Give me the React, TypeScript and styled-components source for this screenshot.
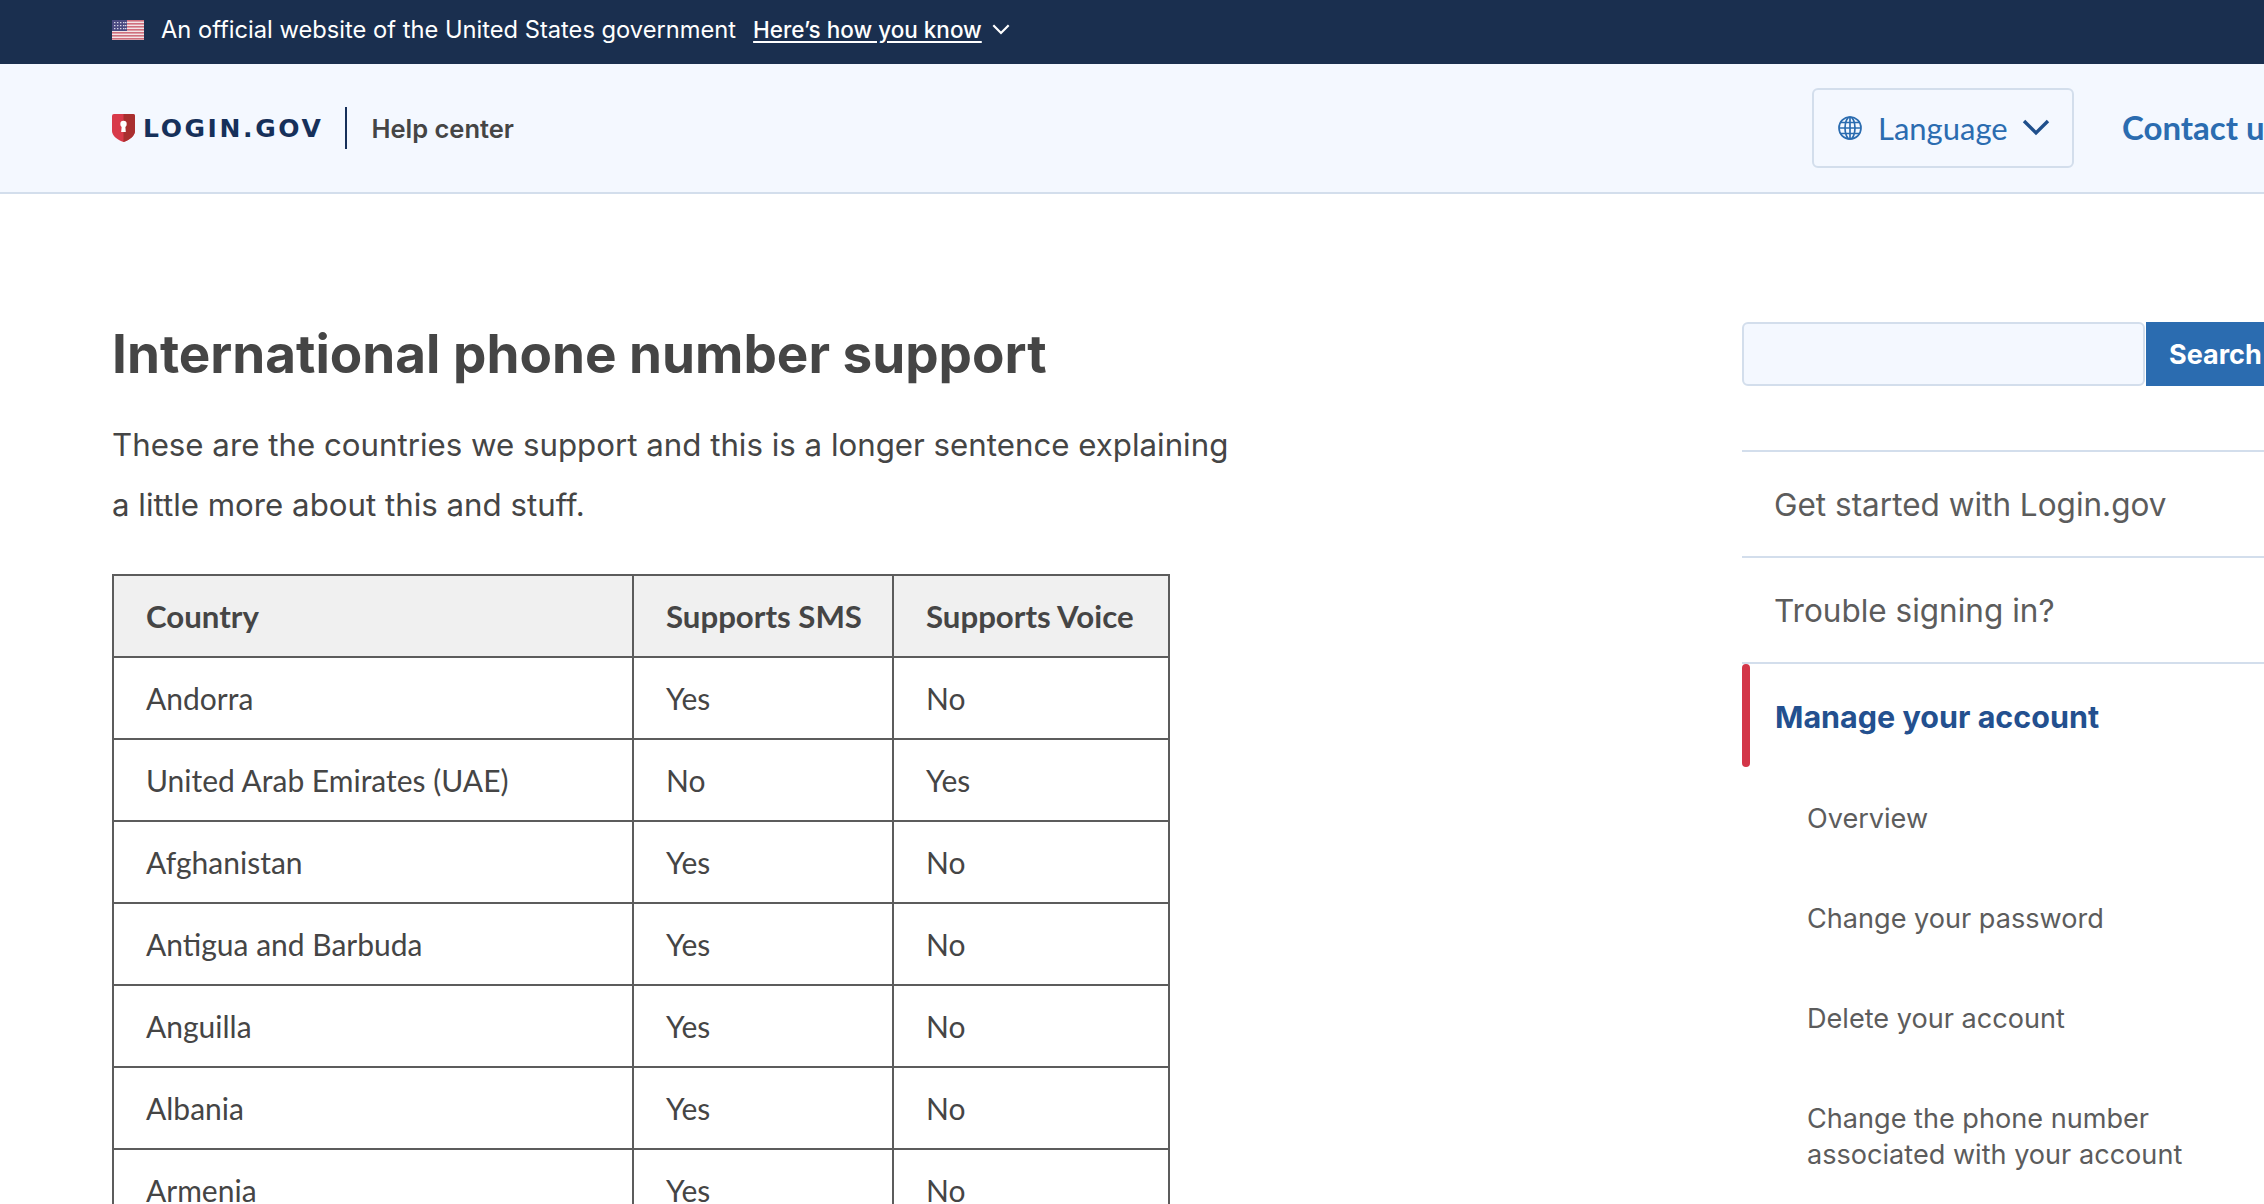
import React from 'react';
import styled, { createGlobalStyle } from 'styled-components';

const rows: [string, string, string][] = [
  ['Andorra', 'Yes', 'No'],
  ['United Arab Emirates (UAE)', 'No', 'Yes'],
  ['Afghanistan', 'Yes', 'No'],
  ['Antigua and Barbuda', 'Yes', 'No'],
  ['Anguilla', 'Yes', 'No'],
  ['Albania', 'Yes', 'No'],
  ['Armenia', 'Yes', 'No'],
];

const subLinks = [
  'Overview',
  'Change your password',
  'Delete your account',
  'Change the phone number associated with your account',
];

const FlagIcon = () => (
  <svg width="32" height="20" viewBox="0 0 32 20">
    <rect width="32" height="20" fill="#f3e4e6" />
    {[0, 3, 6, 9, 12, 15, 18].map((y) => (
      <rect key={y} y={y} width="32" height="1.6" fill="#cf6f7d" />
    ))}
    <rect width="15" height="11" fill="#4a4a80" />
    {[2, 5, 8].map((y) =>
      [2, 5, 8, 11, 13].map((x) => <rect key={`${x}-${y}`} x={x} y={y} width="1.4" height="1.2" fill="#d8d8e8" />),
    )}
  </svg>
);

const ShieldIcon = () => (
  <svg width="23" height="28" viewBox="0 0 23 28">
    <path d="M2 0h19a2 2 0 0 1 2 2v15c0 5-6 9-11.500 11C6 26 0 22 0 17V2a2 2 0 0 1 2-2z" fill="#d83a4a" />
    <path d="M11.500 0H21a2 2 0 0 1 2 2v15c0 5-6 9-11.500 11z" fill="#a92f2f" />
    <circle cx="11.500" cy="10" r="3.200" fill="#fff" />
    <path d="M9.800 11h3.400l.6 7H9.200z" fill="#fff" />
  </svg>
);

const GlobeIcon = () => (
  <svg width="24" height="24" viewBox="0 0 24 24" fill="none" stroke="#2b6cb0" strokeWidth="1.700">
    <circle cx="12" cy="12" r="11" />
    <ellipse cx="12" cy="12" rx="5" ry="11" />
    <path d="M12 1v22M1 12h22M2.500 6.500h19M2.500 17.500h19" />
  </svg>
);

const Chevron = ({ width, color, stroke }: { width: number; color: string; stroke: number }) => (
  <svg width={width} height={width * 0.62} viewBox="0 0 28 17.400" fill="none" stroke={color} strokeWidth={stroke}>
    <path d="M2 2l12 12L26 2" />
  </svg>
);

const App: React.FC = () => (
  <Page>
    <GlobalStyle />
    <GovBanner>
      <FlagIcon />
      <GovText>An official website of the United States government</GovText>
      <GovLink>Here’s how you know</GovLink>
      <Chevron width={18} color="#fff" stroke={3.400} />
    </GovBanner>
    <Header>
      <Brand>
        <ShieldIcon />
        <Wordmark>LOGIN.GOV</Wordmark>
        <BrandDivider />
        <HelpCenter>Help center</HelpCenter>
      </Brand>
      <HeaderNav>
        <LanguageButton>
          <GlobeIcon />
          <LanguageLabel>Language</LanguageLabel>
          <Chevron width={28} color="#1f4f8c" stroke={3.400} />
        </LanguageButton>
        <ContactLink>Contact us</ContactLink>
      </HeaderNav>
    </Header>
    <Body>
      <Main>
        <Title>International phone number support</Title>
        <Intro>
          These are the countries we support and this is a longer sentence explaining a little more about this and
          stuff.
        </Intro>
        <Table>
          <thead>
            <tr>
              <HeadCell $width={520}>Country</HeadCell>
              <HeadCell $width={260}>Supports SMS</HeadCell>
              <HeadCell $width={276}>Supports Voice</HeadCell>
            </tr>
          </thead>
          <tbody>
            {rows.map(([country, sms, voice]) => (
              <tr key={country}>
                <Cell>{country}</Cell>
                <Cell>{sms}</Cell>
                <Cell>{voice}</Cell>
              </tr>
            ))}
          </tbody>
        </Table>
      </Main>
      <Sidebar>
        <SearchForm>
          <SearchInput />
          <SearchButton>Search</SearchButton>
        </SearchForm>
        <NavList>
          <NavItem>Get started with Login.gov</NavItem>
          <NavItem>Trouble signing in?</NavItem>
          <NavItem $active>Manage your account</NavItem>
          <SubList>
            {subLinks.map((link) => (
              <SubItem key={link}>{link}</SubItem>
            ))}
          </SubList>
        </NavList>
      </Sidebar>
    </Body>
  </Page>
);

const GlobalStyle = createGlobalStyle`
  html, body {
    margin: 0;
    height: 1204px;
    overflow: hidden;
    background: #fff;
  }
`;

const Page = styled.div`
  width: 2700px;
  height: 1204px;
  overflow: hidden;
  font-family: 'Inter', 'Liberation Sans', sans-serif;
  color: #454545;
`;

const GovBanner = styled.div`
  display: flex;
  align-items: center;
  box-sizing: border-box;
  height: 64px;
  padding: 0 0 5px 112px;
  background: #1a2f4f;
  color: #fff;
  font-size: 23.700px;
`;

const GovText = styled.span`
  margin-left: 17px;
`;

const GovLink = styled.a`
  margin: 0 10px 0 17px;
  text-decoration: underline;
  text-underline-offset: 3px;
  font-weight: 500;
  font-size: 22.500px;
`;

const Header = styled.header`
  display: grid;
  grid-template-columns: 1700px auto;
  align-items: center;
  height: 128px;
  padding-left: 112px;
  background: #f4f8ff;
  border-bottom: 2px solid #d3deec;
`;

const Brand = styled.div`
  display: flex;
  align-items: center;
`;

const Wordmark = styled.span`
  margin-left: 8px;
  font-family: 'DejaVu Sans', 'Inter', sans-serif;
  font-size: 25px;
  font-weight: 700;
  letter-spacing: 2.600px;
  color: #16305a;
`;

const BrandDivider = styled.span`
  width: 2px;
  height: 42px;
  margin: 0 24px 0 22px;
  background: #16305a;
`;

const HelpCenter = styled.span`
  font-size: 25.500px;
  font-weight: 600;
  color: #454545;
`;

const HeaderNav = styled.nav`
  display: flex;
  align-items: center;
  gap: 48px;
`;

const LanguageButton = styled.button`
  display: flex;
  align-items: center;
  box-sizing: border-box;
  width: 262px;
  height: 80px;
  padding: 0 24px;
  background: transparent;
  border: 2px solid #d3deec;
  border-radius: 6px;
  font-family: 'Lato', 'Noto Sans', sans-serif;
  color: #2b6cb0;

  svg {
    flex-shrink: 0;
  }
`;

const LanguageLabel = styled.span`
  margin: 0 14px 0 16px;
  font-size: 31px;
`;

const ContactLink = styled.a`
  margin-bottom: 3px;
  font-family: 'Lato', 'Noto Sans', sans-serif;
  font-size: 33px;
  font-weight: 700;
  color: #2b6cb0;
`;

const Body = styled.div`
  display: grid;
  grid-template-columns: 1630px 600px;
  padding-left: 112px;
`;

const Main = styled.main`
  padding-top: 118px;
`;

const Title = styled.h1`
  margin: 0;
  font-size: 53px;
  line-height: 84px;
  font-weight: 700;
  color: #454545;
`;

const Intro = styled.p`
  width: 1130px;
  margin: 19px 0 39px;
  font-size: 31.250px;
  line-height: 60px;
  color: #454545;
`;

const Table = styled.table`
  border-collapse: collapse;
  table-layout: fixed;
  width: 1058px;
  font-family: 'Lato', 'Noto Sans', sans-serif;
  font-size: 30px;
  color: #454545;
`;

const HeadCell = styled.th<{ $width: number }>`
  width: ${(p) => p.$width}px;
  height: 82px;
  box-sizing: border-box;
  padding: 0 32px;
  text-align: left;
  font-size: 31.200px;
  font-weight: 700;
  background: #f0f0f0;
  border: 2px solid #5c5c5c;
  white-space: nowrap;
`;

const Cell = styled.td`
  height: 82px;
  box-sizing: border-box;
  padding: 0 32px;
  border: 2px solid #5c5c5c;
  white-space: nowrap;
`;

const Sidebar = styled.aside`
  padding-top: 128px;
`;

const SearchForm = styled.form`
  display: flex;
  height: 64px;
  gap: 1px;
`;

const SearchInput = styled.input`
  box-sizing: border-box;
  width: 403px;
  height: 64px;
  background: #f4f8ff;
  border: 2px solid #d3deec;
  border-radius: 6px;
`;

const SearchButton = styled.button`
  width: 160px;
  padding: 0 23px;
  text-align: left;
  background: #2b6cb0;
  border: 0;
  color: #fff;
  font-family: 'Inter', sans-serif;
  font-size: 27px;
  font-weight: 700;
`;

const NavList = styled.div`
  margin-top: 64px;
  border-top: 2px solid #d3deec;
`;

const NavItem = styled.a<{ $active?: boolean }>`
  position: relative;
  display: flex;
  align-items: center;
  box-sizing: border-box;
  height: ${(p) => (p.$active ? '105px' : '106px')};
  padding: 0 0 ${(p) => (p.$active ? '1px' : '0')} ${(p) => (p.$active ? '33px' : '32px')};
  font-size: ${(p) => (p.$active ? '30.500px' : '31.500px')};
  font-weight: ${(p) => (p.$active ? 700 : 400)};
  color: ${(p) => (p.$active ? '#23508f' : '#5c5c5c')};
  border-bottom: ${(p) => (p.$active ? '0' : '2px solid #d3deec')};

  ${(p) =>
    p.$active &&
    `&::before {
      content: '';
      position: absolute;
      left: 0;
      top: 0;
      width: 8px;
      height: 103px;
      border-radius: 4px;
      background: #d33648;
    }`}
`;

const SubList = styled.div`
  display: flex;
  flex-direction: column;
`;

const SubItem = styled.a`
  display: block;
  width: 400px;
  padding: 32px 0 32px 65px;
  font-size: 27.100px;
  line-height: 36px;
  color: #5c5c5c;
`;

export default App;
